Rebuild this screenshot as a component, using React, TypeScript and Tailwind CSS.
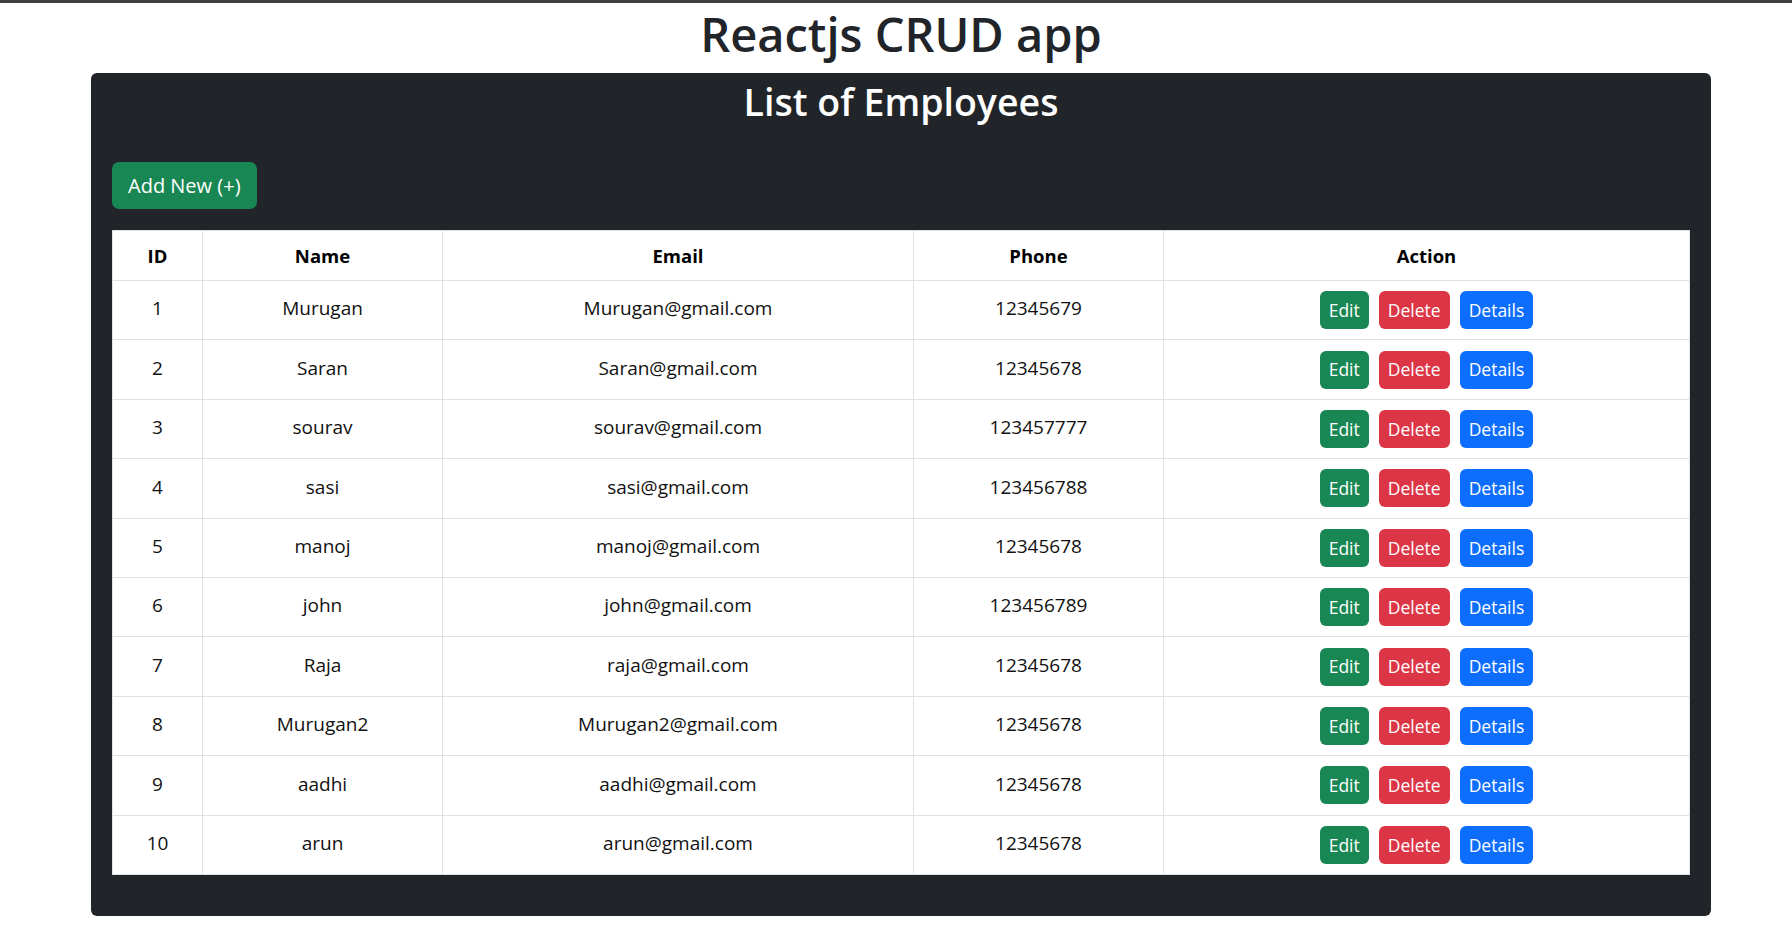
import React from "react";

type Employee = {
  id: number;
  name: string;
  email: string;
  phone: string;
};

const employees: Employee[] = [
  { id: 1, name: "Murugan", email: "Murugan@gmail.com", phone: "12345679" },
  { id: 2, name: "Saran", email: "Saran@gmail.com", phone: "12345678" },
  { id: 3, name: "sourav", email: "sourav@gmail.com", phone: "123457777" },
  { id: 4, name: "sasi", email: "sasi@gmail.com", phone: "123456788" },
  { id: 5, name: "manoj", email: "manoj@gmail.com", phone: "12345678" },
  { id: 6, name: "john", email: "john@gmail.com", phone: "123456789" },
  { id: 7, name: "Raja", email: "raja@gmail.com", phone: "12345678" },
  { id: 8, name: "Murugan2", email: "Murugan2@gmail.com", phone: "12345678" },
  { id: 9, name: "aadhi", email: "aadhi@gmail.com", phone: "12345678" },
  { id: 10, name: "arun", email: "arun@gmail.com", phone: "12345678" },
];

const headers = ["ID", "Name", "Email", "Phone", "Action"];

const App = () => {
  return (
    <div
      className="min-h-screen bg-white text-[#212529]"
      style={{ fontFamily: '"Open Sans", "Noto Sans", sans-serif' }}
    >
      {/* top strip */}
      <div className="h-[3px] bg-[#3f3f3f]" />

      <div className="ml-[91px] w-[1620px]">
        <h1 className="mt-[3px] mb-[11px] text-center text-[47px] leading-[56px] font-semibold text-[#212529]">
          Reactjs CRUD app
        </h1>

        {/* ✅ Card */}
        <div className="rounded-[6px] bg-[#212529] px-[21px] pt-[6px] pb-[41px]">
          <h2 className="text-center text-[37.5px] leading-[46px] font-semibold text-white">
            List of Employees
          </h2>

          <button className="mt-[37px] h-[47px] rounded-[7px] bg-[#198754] px-[16px] text-[20px] leading-[27px] text-white">
            Add New (+)
          </button>

          {/* ✅ Employees table */}
          <table className="mt-[21px] w-full table-fixed border-collapse border border-[#dee2e6] bg-white text-[19px] text-[#111]">
            <colgroup>
              <col className="w-[90px]" />
              <col className="w-[240px]" />
              <col className="w-[471px]" />
              <col className="w-[250px]" />
              <col />
            </colgroup>
            <thead>
              <tr className="h-[50px]">
                {headers.map((h) => (
                  <th
                    key={h}
                    className="border border-[#dee2e6] px-2 text-center align-middle text-[18.5px] font-bold text-black"
                  >
                    {h}
                  </th>
                ))}
              </tr>
            </thead>
            <tbody>
              {employees.map((emp) => (
                <tr key={emp.id} className="h-[59.4px]">
                  <td className="border border-[#dee2e6] px-2 pb-[3px] text-center align-middle">
                    {emp.id}
                  </td>
                  <td className="border border-[#dee2e6] px-2 pb-[3px] text-center align-middle">
                    {emp.name}
                  </td>
                  <td className="border border-[#dee2e6] px-2 pb-[3px] text-center align-middle">
                    {emp.email}
                  </td>
                  <td className="border border-[#dee2e6] px-2 pb-[3px] text-center align-middle">
                    {emp.phone}
                  </td>
                  <td className="border border-[#dee2e6] px-2 py-[10px] align-middle">
                    <div className="flex justify-center gap-[10px]">
                      <button className="h-[38px] rounded-[6px] bg-[#198754] px-[9px] text-[17.5px] text-white">
                        Edit
                      </button>
                      <button className="h-[38px] rounded-[6px] bg-[#dc3545] px-[9px] text-[17.5px] text-white">
                        Delete
                      </button>
                      <button className="h-[38px] rounded-[6px] bg-[#0d6efd] px-[9px] text-[17.5px] text-white">
                        Details
                      </button>
                    </div>
                  </td>
                </tr>
              ))}
            </tbody>
          </table>
        </div>
      </div>
    </div>
  );
};

export default App;
